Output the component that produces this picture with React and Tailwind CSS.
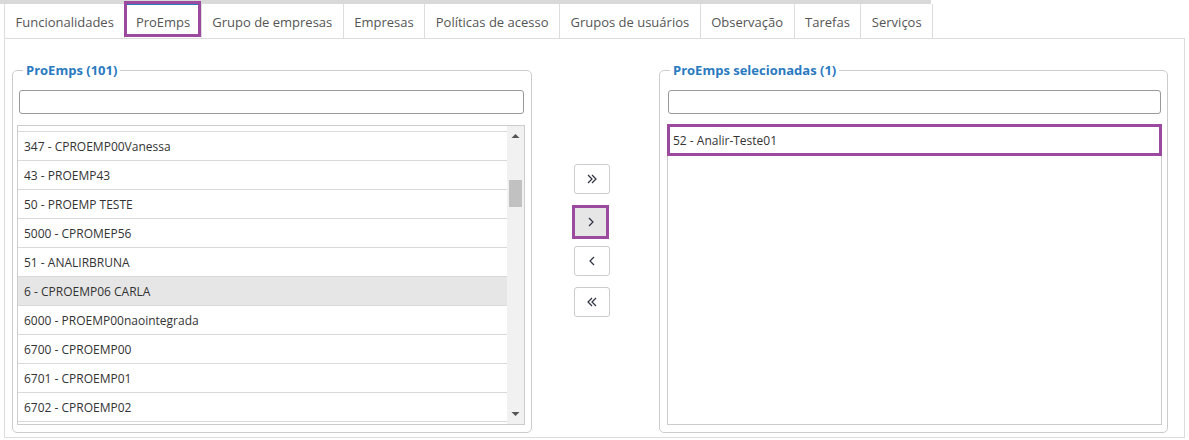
import React from 'react';

const tabs = [
  'Funcionalidades',
  'ProEmps',
  'Grupo de empresas',
  'Empresas',
  'Políticas de acesso',
  'Grupos de usuários',
  'Observação',
  'Tarefas',
  'Serviços',
];

const proemps = [
  '347 - CPROEMP00Vanessa',
  '43 - PROEMP43',
  '50 - PROEMP TESTE',
  '5000 - CPROMEP56',
  '51 - ANALIRBRUNA',
  '6 - CPROEMP06 CARLA',
  '6000 - PROEMP00naointegrada',
  '6700 - CPROEMP00',
  '6701 - CPROEMP01',
  '6702 - CPROEMP02',
];

function Tabs() {
  return (
    <div className="flex border-b border-[#dddddd]">
      {tabs.map((tab, i) => (
        <div
          key={tab}
          className={
            'relative h-[34px] px-[10.5px] pt-[3px] flex items-center text-[13px] text-[#555555] border-r border-[#dddddd] ' +
            (i === 0 ? 'border-l' : '')
          }
        >
          {tab}
          {tab === 'ProEmps' && (
            <>
              <span className="absolute left-0 right-0 top-0 h-[1px] bg-[#2a7ac0]" />
              <span className="absolute -left-[1px] -top-[3px] w-[77px] h-[36px] border-[3px] border-[#9b4a9f]" />
            </>
          )}
        </div>
      ))}
    </div>
  );
}

function Legend({ children }) {
  return (
    <legend className="ml-[10px] px-[3px] text-[13px] leading-[18px] font-bold text-[#2a7ac0]">
      {children}
    </legend>
  );
}

function Scrollbar() {
  return (
    <div className="w-[17px] bg-[#f1f1f1] flex flex-col items-center">
      <svg width="9" height="6" viewBox="0 0 9 6" className="mt-[7px]">
        <path d="M0.5 5 L4.5 1 L8.5 5 Z" fill="#555555" />
      </svg>
      <div className="mt-[41px] w-[13px] h-[27px] bg-[#c1c1c1]" />
      <div className="flex-1" />
      <svg width="9" height="6" viewBox="0 0 9 6" className="mb-[7px]">
        <path d="M0.5 1 L4.5 5 L8.5 1 Z" fill="#555555" />
      </svg>
    </div>
  );
}

const arrows = {
  allRight: 'M2 1 L6 5 L2 9 M6 1 L10 5 L6 9',
  right: 'M4 1 L8 5 L4 9',
  left: 'M8 1 L4 5 L8 9',
  allLeft: 'M6 1 L2 5 L6 9 M10 1 L6 5 L10 9',
};

function MoveButton({ dir, active }) {
  const icon = (
    <svg width="12" height="10" viewBox="0 0 12 10" fill="none">
      <path d={arrows[dir]} stroke="#2b3140" strokeWidth="1.2" strokeLinejoin="miter" />
    </svg>
  );
  if (active) {
    return (
      <button className="-ml-[2px] w-[37px] h-[34px] border-[3px] border-[#9b4a9f] bg-[#e6e6e6] flex items-center justify-center">
        {icon}
      </button>
    );
  }
  return (
    <button className="w-[36px] h-[30px] border border-[#cccccc] rounded-[3px] bg-white flex items-center justify-center">
      {icon}
    </button>
  );
}

export default function App() {
  return (
    <div
      className="w-[1189px] h-[440px] bg-white overflow-hidden"
      style={{ fontFamily: '"Open Sans", "Noto Sans", sans-serif' }}
    >
      <div className="h-[4px] w-[931px] bg-[#d9d9d9]" />
      <div className="ml-[4px] w-[1181px]">
        <Tabs />
        <div className="h-[399px] border-x border-b border-[#dddddd] pl-[7px] pt-[22px] flex items-start">
          {/* left list */}
          <fieldset className="w-[520px] border border-[#cccccc] rounded-[5px] pb-[7px]">
            <Legend>ProEmps (101)</Legend>
            <input
              type="text"
              className="block mt-[11px] ml-[6px] w-[505px] h-[24px] border border-[#999999] rounded-[3px] outline-none"
            />
            <div className="mt-[11px] ml-[4px] w-[508px] h-[300px] border border-[#cccccc] flex overflow-hidden">
              <div className="flex-1 text-[12px] text-[#333333]">
                <div className="h-[6px] border-b border-[#d9d9d9]" />
                {proemps.map((p) => (
                  <div
                    key={p}
                    className={
                      'h-[29px] border-b border-[#d9d9d9] pl-[6px] pt-[1px] flex items-center ' +
                      (p.startsWith('6 - ') ? 'bg-[#e6e6e6]' : '')
                    }
                  >
                    {p}
                  </div>
                ))}
              </div>
              <Scrollbar />
            </div>
          </fieldset>

          {/* move buttons */}
          <div className="w-[127px] pl-[42px] pt-[103px] flex flex-col">
            <MoveButton dir="allRight" />
            <div className="mt-[11px]">
              <MoveButton dir="right" active />
            </div>
            <div className="mt-[7px]">
              <MoveButton dir="left" />
            </div>
            <div className="mt-[11px]">
              <MoveButton dir="allLeft" />
            </div>
          </div>

          {/* right list */}
          <fieldset className="w-[509px] border border-[#cccccc] rounded-[5px] pb-[7px]">
            <Legend>ProEmps selecionadas (1)</Legend>
            <input
              type="text"
              className="block mt-[11px] ml-[8px] w-[493px] h-[24px] border border-[#999999] rounded-[3px] outline-none"
            />
            <div className="mt-[10px] ml-[7px] w-[495px] h-[301px] border border-[#cccccc] text-[12px] text-[#333333]">
              <div className="-mx-px -mt-px h-[32px] border-[3px] border-[#9b4a9f] pl-[3px] pt-[1px] flex items-center">
                52 - Analir-Teste01
              </div>
            </div>
          </fieldset>
        </div>
      </div>
    </div>
  );
}
